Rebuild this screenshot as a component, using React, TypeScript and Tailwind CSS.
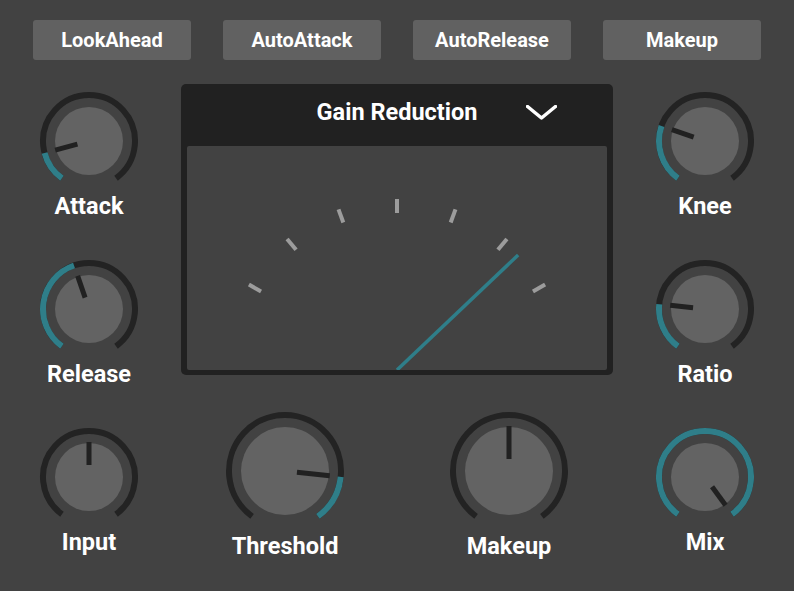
const START = -144;
const END = 144;

const polar = (cx: number, cy: number, r: number, deg: number) => {
  const a = (deg * Math.PI) / 180;
  return [cx + r * Math.sin(a), cy - r * Math.cos(a)];
};

const arcPath = (cx: number, cy: number, r: number, from: number, to: number) => {
  const [x1, y1] = polar(cx, cy, r, from);
  const [x2, y2] = polar(cx, cy, r, to);
  const large = to - from > 180 ? 1 : 0;
  return `M ${x1} ${y1} A ${r} ${r} 0 ${large} 1 ${x2} ${y2}`;
};

type KnobProps = {
  label: string;
  angle: number;
  fill?: [number, number];
  big?: boolean;
};

const Knob = ({ label, angle, fill, big }: KnobProps) => {
  const size = big ? 120 : 100;
  const c = size / 2;
  const ring = big ? 56 : 46;
  const body = big ? 44 : 34;
  const [ix1, iy1] = polar(c, c, 12, angle);
  const [ix2, iy2] = polar(c, c, body + 1, angle);
  return (
    <div className="flex flex-col items-center">
      <svg width={size} height={size} viewBox={`0 0 ${size} ${size}`}>
        <path d={arcPath(c, c, ring, START, END)} fill="none" stroke="#232323" strokeWidth={6} />
        {fill && fill[1] > fill[0] && (
          <path d={arcPath(c, c, ring, fill[0], fill[1])} fill="none" stroke="#2f7e89" strokeWidth={6} />
        )}
        <circle cx={c} cy={c} r={body} fill="#636363" />
        <line x1={ix1} y1={iy1} x2={ix2} y2={iy2} stroke="#212121" strokeWidth={5} />
      </svg>
      <span className="mt-[2px] text-[23.5px] leading-[26px] font-bold text-white whitespace-nowrap">{label}</span>
    </div>
  );
};

const Meter = () => {
  const ticks = [-60, -40, -20, 0, 20, 40, 60];
  const [nx, ny] = polar(210, 224, 167, 46.5);
  return (
    <svg width={420} height={224} viewBox="0 0 420 224">
      {ticks.map((t) => {
        const [x1, y1] = polar(210, 224, 157, t);
        const [x2, y2] = polar(210, 224, 171, t);
        return <line key={t} x1={x1} y1={y1} x2={x2} y2={y2} stroke="#9c9c9c" strokeWidth={4} />;
      })}
      <line x1={210} y1={224} x2={nx} y2={ny} stroke="#2f7e89" strokeWidth={3.5} />
    </svg>
  );
};

const buttons = ["LookAhead", "AutoAttack", "AutoRelease", "Makeup"];

export default function App() {
  return (
    <div className="w-[794px] h-[591px] bg-[#424242] overflow-hidden" style={{ fontFamily: "Roboto, 'Liberation Sans', sans-serif" }}>
      <div className="flex gap-[32px] px-[33px] pt-[20px]">
        {buttons.map((b) => (
          <div
            key={b}
            className="w-[158px] h-[40px] rounded-[3px] bg-[#616161] flex items-center justify-center text-white font-bold text-[20px]"
          >
            {b}
          </div>
        ))}
      </div>

      <div className="flex justify-between mt-[24px]">
        <div className="w-[178px] flex flex-col items-center gap-[40px] pt-[7px]">
          <Knob label="Attack" angle={-105} fill={[START, -105]} />
          <Knob label="Release" angle={-19} fill={[START, -19]} />
          <Knob label="Input" angle={0} />
        </div>

        <div className="w-[432px] flex flex-col">
          <div className="h-[291px] rounded-[5px] bg-[#212121] flex flex-col px-[6px] pb-[5px]">
            <div className="relative h-[62px] flex items-center justify-center">
              <span className="text-white font-bold text-[23.5px] -mt-[4px]">Gain Reduction</span>
              <svg className="absolute right-[50px] top-[21px]" width={31} height={15} viewBox="0 0 31 15">
                <polyline points="1.5,1.5 15.5,13 29.5,1.5" fill="none" stroke="white" strokeWidth={3.5} strokeLinecap="round" strokeLinejoin="round" />
              </svg>
            </div>
            <div className="flex-1 rounded-[2px] bg-[#424242] overflow-hidden">
              <Meter />
            </div>
          </div>
          <div className="flex justify-center gap-[104px] mt-[36px]">
            <Knob label="Threshold" angle={96} fill={[96, END]} big />
            <Knob label="Makeup" angle={0} big />
          </div>
        </div>

        <div className="w-[178px] flex flex-col items-center gap-[40px] pt-[7px]">
          <Knob label="Knee" angle={-71} fill={[START, -71]} />
          <Knob label="Ratio" angle={-84} fill={[START, -84]} />
          <Knob label="Mix" angle={144} fill={[START, END]} />
        </div>
      </div>
    </div>
  );
}
